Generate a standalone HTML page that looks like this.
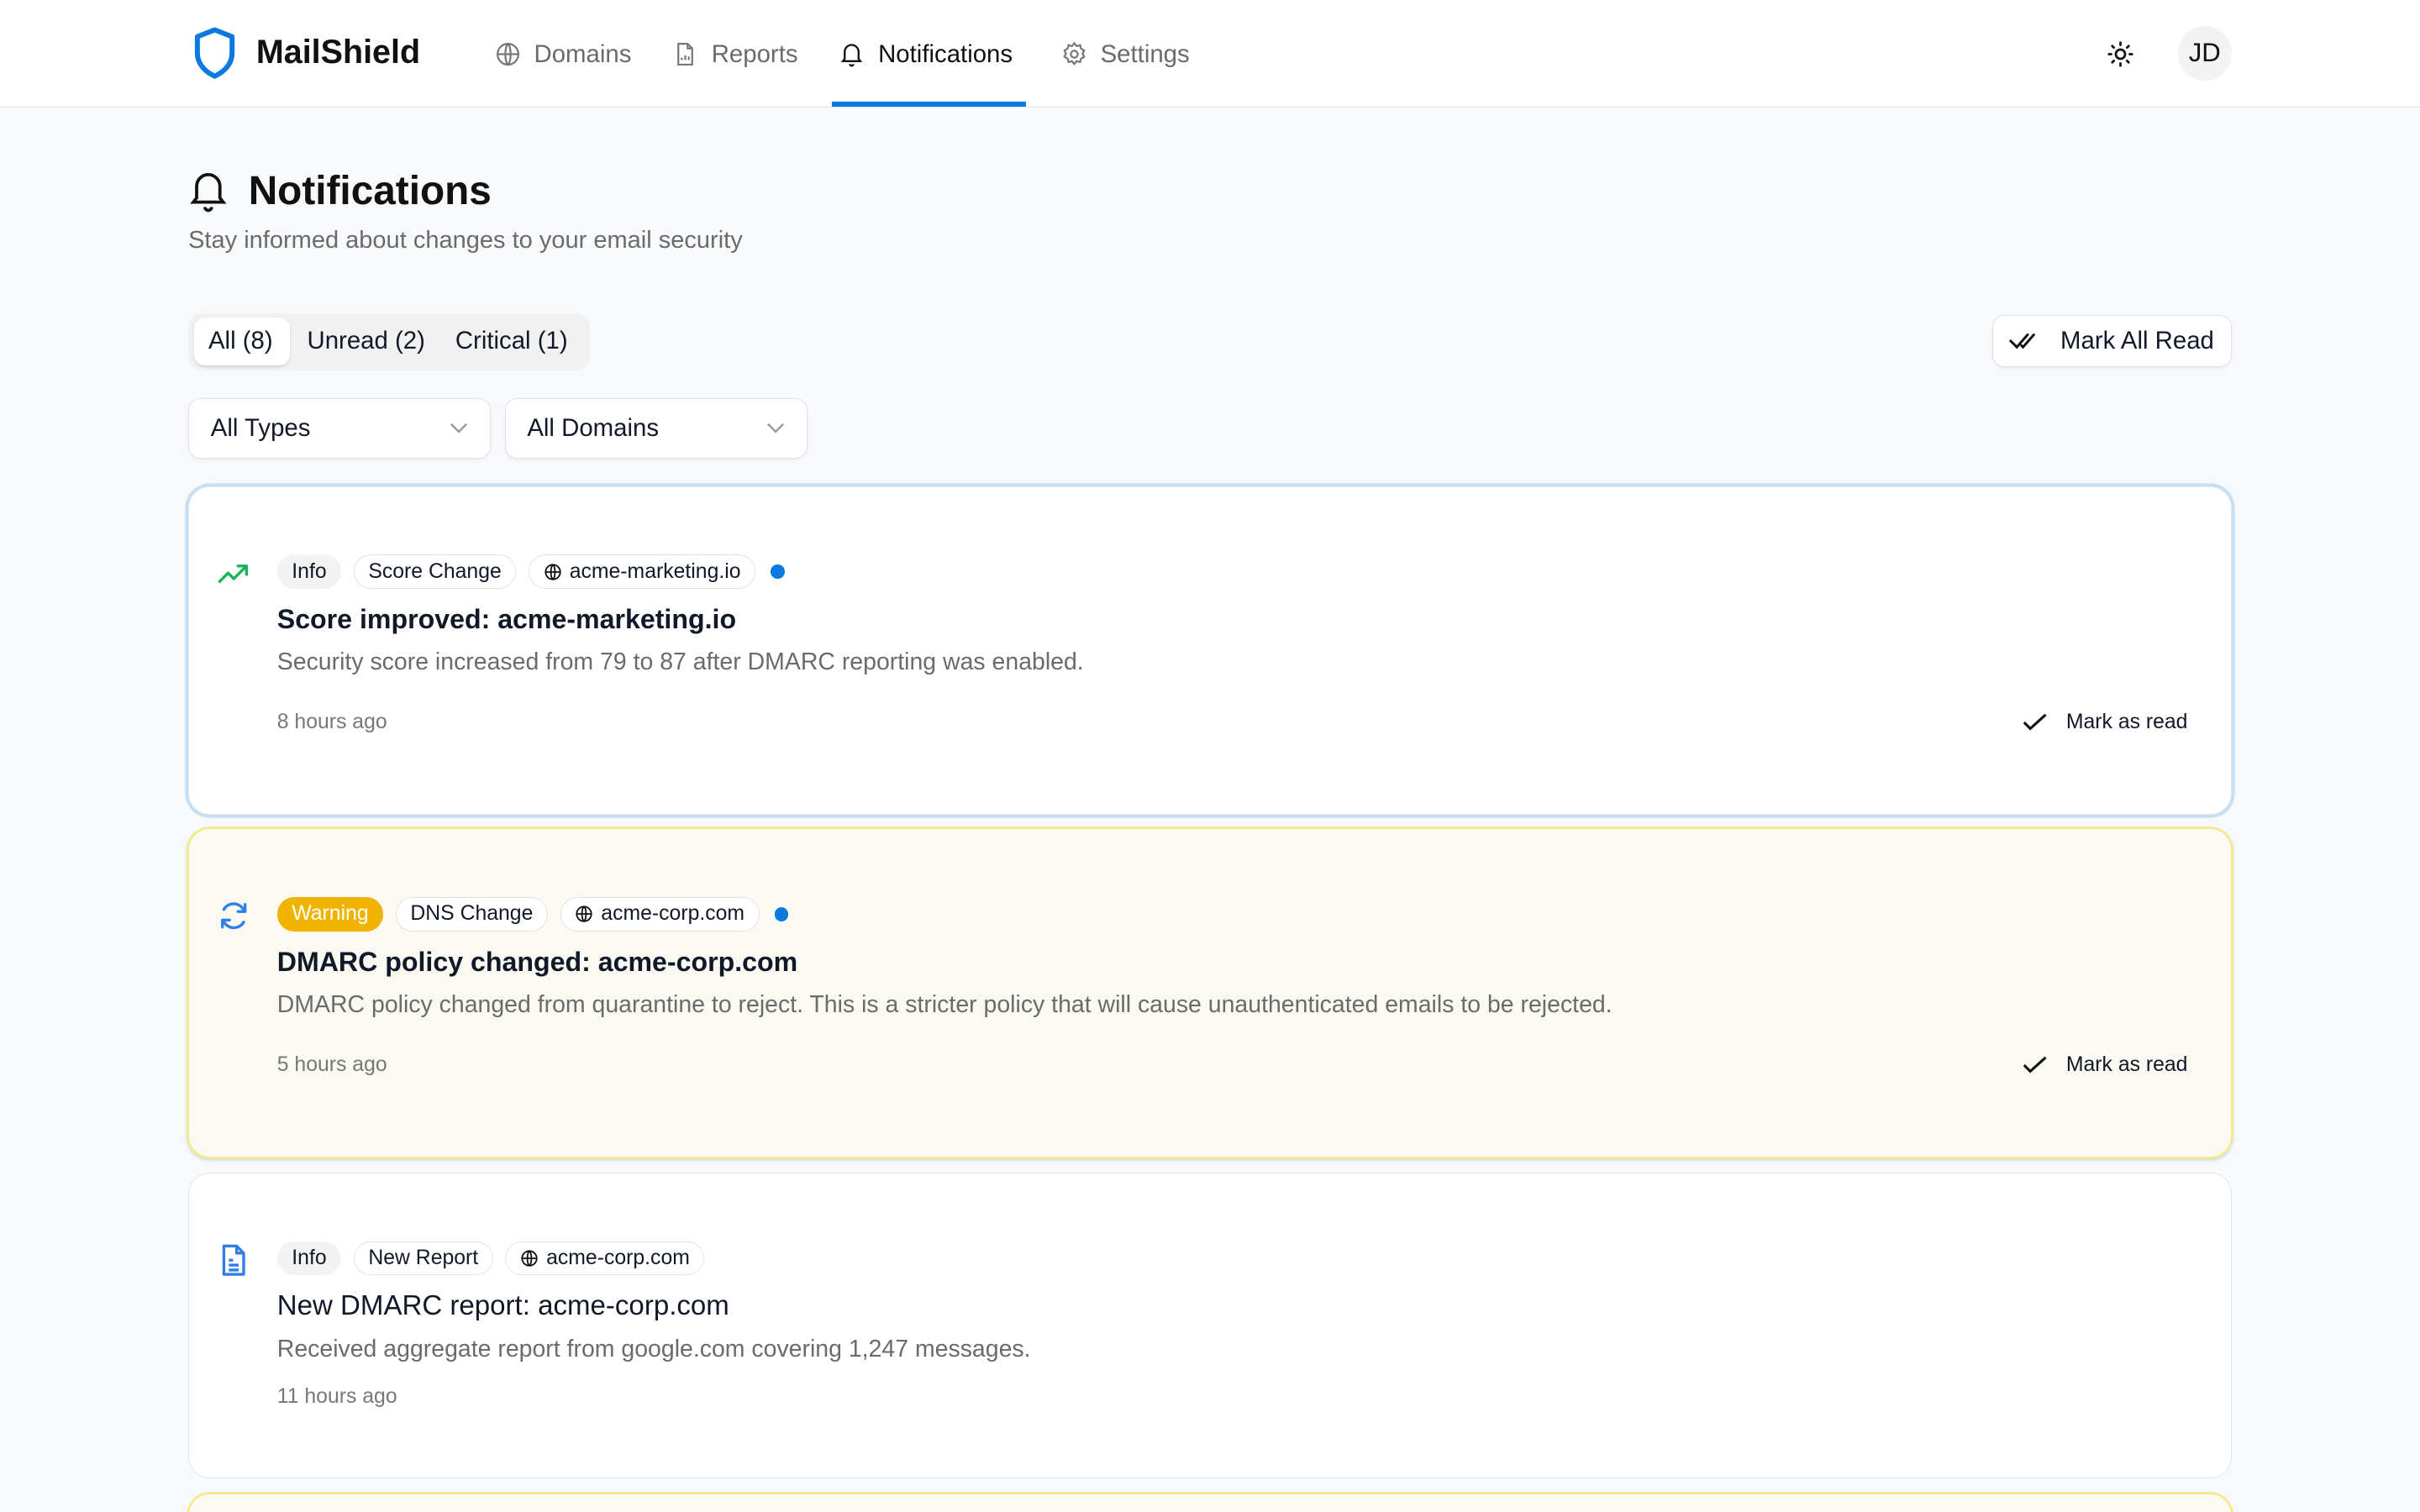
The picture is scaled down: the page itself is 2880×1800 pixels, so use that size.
<!DOCTYPE html>
<html><head><meta charset="utf-8">
<style>
html{zoom:1.836735;overflow:hidden;height:980px}
body{margin:0;width:1568px;height:980px;overflow:hidden;background:#f8f9fb;font-family:"Liberation Sans",sans-serif;color:#111827;position:relative}
.abs{position:absolute}
.hdr{position:absolute;left:0;top:0;width:1568px;height:69px;background:#fff;border-bottom:1px solid #e3e4e2}
.nav{position:absolute;top:26px;font-size:16px;color:#6b6b6b;display:flex;align-items:center;gap:8px}
.nav svg{width:18px;height:18px}
.card{position:absolute;left:122px;width:1324px;box-sizing:border-box;border-radius:14px;background:#fff;border:1px solid #e4e5e7}
.badge{display:inline-flex;align-items:center;height:22px;padding:0 9px;border-radius:11px;font-size:13.5px;border:1px solid #e2e3e5;box-sizing:border-box;margin-right:8px;color:#111827;background:#fff}
.badge.g{background:#f3f3f4;border-color:#f3f3f4}
.badge.w{background:#f0b400;border-color:#f0b400;color:#fff}
.badge svg{width:12px;height:12px;margin-right:5px}
.dot{display:inline-block;width:9px;height:9px;border-radius:50%;background:#0a7ae0;vertical-align:middle;margin-left:2px}
.row{position:absolute;left:57px;display:flex;align-items:center}
.t{position:absolute;left:57px;font-size:17.5px;font-weight:bold;color:#111827}
.d{position:absolute;left:57px;font-size:15.5px;color:#6b6b6b}
.tm{position:absolute;left:57px;font-size:13.5px;color:#777}
.mr{position:absolute;right:28px;font-size:13.5px;color:#111827;display:flex;align-items:center;gap:12px}
.ic{position:absolute;left:18px;width:22px;height:22px}
.sel{position:absolute;top:258px;height:39px;width:196px;box-sizing:border-box;border:1px solid #e2e3e5;border-radius:8px;background:#fff;font-size:16px;padding:0 14px;display:flex;align-items:center;justify-content:space-between;box-shadow:0 1px 2px rgba(0,0,0,.05)}
</style></head><body>
<div class="hdr">
  <svg class="abs" style="left:124px;top:17px" width="30" height="35" viewBox="0 0 24 28"><path d="M12 2 L21 5.5 V14 C21 20 16.5 24 12 26 C7.5 24 3 20 3 14 V5.5 Z" fill="none" stroke="#0a7ae0" stroke-width="2.6" stroke-linejoin="round"/></svg>
  <div class="abs" style="left:166px;top:22px;font-size:21.5px;font-weight:bold;color:#111">MailShield</div>
  <div class="nav" style="left:320px"><svg viewBox="0 0 24 24" fill="none" stroke="#777" stroke-width="1.6"><circle cx="12" cy="12" r="9"/><path d="M3 12h18M12 3c3 3 3 15 0 18M12 3c-3 3-3 15 0 18"/></svg>Domains</div>
  <div class="nav" style="left:435px"><svg viewBox="0 0 24 24" fill="none" stroke="#777" stroke-width="1.6"><path d="M6 3h8l4 4v14H6z"/><path d="M14 3v4h4M9 17v-2M12 17v-4M15 17v-3"/></svg>Reports</div>
  <div class="nav" style="left:543px;color:#111"><svg viewBox="0 0 24 24" fill="none" stroke="#111" stroke-width="1.7"><path d="M6 16V10a6 6 0 0 1 12 0v6l1.5 2h-15z"/><path d="M10.5 20.5a1.5 1.5 0 0 0 3 0"/></svg>Notifications</div>
  <div class="abs" style="left:539px;top:66px;width:126px;height:3px;background:#0a7ae0"></div>
  <div class="nav" style="left:687px"><svg viewBox="0 0 24 24" fill="none" stroke="#777" stroke-width="1.6"><circle cx="12" cy="12" r="3"/><path d="M12 2.5l2 2.5 3-.8.8 3 2.7 1.6-1.3 2.7 1.3 2.7-2.7 1.6-.8 3-3-.8-2 2.5-2-2.5-3 .8-.8-3-2.7-1.6 1.3-2.7-1.3-2.7 2.7-1.6.8-3 3 .8z"/></svg>Settings</div>
  <svg class="abs" style="left:1365px;top:26px" width="18" height="18" viewBox="0 0 24 24" fill="none" stroke="#111" stroke-width="2" stroke-linecap="round"><circle cx="12" cy="12" r="4"/><path d="M12 2v2M12 20v2M2 12h2M20 12h2M4.9 4.9l1.4 1.4M17.7 17.7l1.4 1.4M4.9 19.1l1.4-1.4M17.7 6.3l1.4-1.4"/></svg>
  <div class="abs" style="left:1411px;top:17px;width:35px;height:35px;border-radius:50%;background:#f3f3f4;font-size:17px;display:flex;align-items:center;justify-content:center;color:#111">JD</div>
</div>

<svg class="abs" style="left:122px;top:110px" width="26" height="28" viewBox="0 0 24 26" fill="none" stroke="#111" stroke-width="1.9"><path d="M5 17V10a7 7 0 0 1 14 0v7l2 2.5H3z"/><path d="M10 22.5a2 2 0 0 0 4 0"/></svg>
<div class="abs" style="left:161px;top:109px;font-size:26px;font-weight:bold;color:#111">Notifications</div>
<div class="abs" style="left:122px;top:147px;font-size:15.8px;color:#6b6b6b">Stay informed about changes to your email security</div>

<div class="abs" style="left:122px;top:203px;width:260px;height:37px;background:#f1f1f2;border-radius:9px"></div>
<div class="abs" style="left:126px;top:206px;width:62px;height:31px;background:#fff;border-radius:7px;box-shadow:0 1px 2px rgba(0,0,0,.12)"></div>
<div class="abs" style="left:135px;top:212px;font-size:16px">All (8)</div>
<div class="abs" style="left:199px;top:212px;font-size:16px">Unread (2)</div>
<div class="abs" style="left:295px;top:212px;font-size:16px">Critical (1)</div>

<div class="abs" style="left:1291px;top:204px;width:155px;height:34px;box-sizing:border-box;border:1px solid #e2e3e5;border-radius:8px;background:#fff;box-shadow:0 1px 2px rgba(0,0,0,.05)"></div>
<svg class="abs" style="left:1302px;top:214px" width="18" height="14" viewBox="0 0 18 14" fill="none" stroke="#111" stroke-width="1.6" stroke-linecap="round"><path d="M1 7l4 4 7-8M8 10l1 1 7-8"/></svg>
<div class="abs" style="left:1335px;top:212px;font-size:16px">Mark All Read</div>

<div class="sel" style="left:122px">All Types<svg width="12" height="8" viewBox="0 0 12 8" fill="none" stroke="#999" stroke-width="1.3"><path d="M1 1.5l5 5 5-5"/></svg></div>
<div class="sel" style="left:327px">All Domains<svg width="12" height="8" viewBox="0 0 12 8" fill="none" stroke="#999" stroke-width="1.3"><path d="M1 1.5l5 5 5-5"/></svg></div>

<div class="card" style="top:315px;height:213px;box-shadow:0 0 0 2px #c6dff2">
  <svg class="ic" style="top:45px" viewBox="0 0 24 24" fill="none" stroke="#16b45a" stroke-width="2" stroke-linecap="round" stroke-linejoin="round"><path d="M2 18l6-6 4 4 9-9M15 7h6v6"/></svg>
  <div class="row" style="top:44px"><span class="badge g">Info</span><span class="badge">Score Change</span><span class="badge"><svg viewBox="0 0 24 24" fill="none" stroke="#111" stroke-width="2"><circle cx="12" cy="12" r="9.5"/><path d="M2.5 12h19M12 2.5c3.5 3 3.5 16 0 19M12 2.5c-3.5 3-3.5 16 0 19"/></svg>acme-marketing.io</span><span class="dot"></span></div>
  <div class="t" style="top:76px">Score improved: acme-marketing.io</div>
  <div class="d" style="top:105px">Security score increased from 79 to 87 after DMARC reporting was enabled.</div>
  <div class="tm" style="top:145px">8 hours ago</div>
  <div class="mr" style="top:145px"><svg width="16" height="12" viewBox="0 0 16 12" fill="none" stroke="#111" stroke-width="1.7"><path d="M1 6l4 4 10-9"/></svg>Mark as read</div>
</div>

<div class="card" style="top:537px;height:213px;background:#fafaf2;border-color:#f6e98a;box-shadow:0 0 0 1px #f6e98a,0 1px 2px 1px #c6dff2">
  <svg class="ic" style="top:45px" viewBox="0 0 24 24" fill="none" stroke="#2f7fe6" stroke-width="2" stroke-linecap="round" stroke-linejoin="round"><path d="M20 4v5h-5M4 20v-5h5"/><path d="M19.5 9A8 8 0 0 0 5 7.5M4.5 15A8 8 0 0 0 19 16.5"/></svg>
  <div class="row" style="top:44px"><span class="badge w">Warning</span><span class="badge">DNS Change</span><span class="badge"><svg viewBox="0 0 24 24" fill="none" stroke="#111" stroke-width="2"><circle cx="12" cy="12" r="9.5"/><path d="M2.5 12h19M12 2.5c3.5 3 3.5 16 0 19M12 2.5c-3.5 3-3.5 16 0 19"/></svg>acme-corp.com</span><span class="dot"></span></div>
  <div class="t" style="top:76px">DMARC policy changed: acme-corp.com</div>
  <div class="d" style="top:105px">DMARC policy changed from quarantine to reject. This is a stricter policy that will cause unauthenticated emails to be rejected.</div>
  <div class="tm" style="top:145px">5 hours ago</div>
  <div class="mr" style="top:145px"><svg width="16" height="12" viewBox="0 0 16 12" fill="none" stroke="#111" stroke-width="1.7"><path d="M1 6l4 4 10-9"/></svg>Mark as read</div>
</div>

<div class="card" style="top:760px;height:198px">
  <svg class="ic" style="top:45px" viewBox="0 0 24 24" fill="none" stroke="#2f7fe6" stroke-width="2" stroke-linejoin="round"><path d="M5 2h9l5 5v15H5z"/><path d="M14 2v5h5M8.5 12h3M8.5 15.5h7M8.5 19h7"/></svg>
  <div class="row" style="top:44px"><span class="badge g">Info</span><span class="badge">New Report</span><span class="badge"><svg viewBox="0 0 24 24" fill="none" stroke="#111" stroke-width="2"><circle cx="12" cy="12" r="9.5"/><path d="M2.5 12h19M12 2.5c3.5 3 3.5 16 0 19M12 2.5c-3.5 3-3.5 16 0 19"/></svg>acme-corp.com</span></div>
  <div class="t" style="top:76px;font-weight:normal;font-size:18px">New DMARC report: acme-corp.com</div>
  <div class="d" style="top:105px">Received aggregate report from google.com covering 1,247 messages.</div>
  <div class="tm" style="top:137px">11 hours ago</div>
</div>

<div class="card" style="top:968px;height:30px;background:#fafaf2;border-color:#f6e98a;box-shadow:0 0 0 1px #f6e98a"></div>
</body></html>
